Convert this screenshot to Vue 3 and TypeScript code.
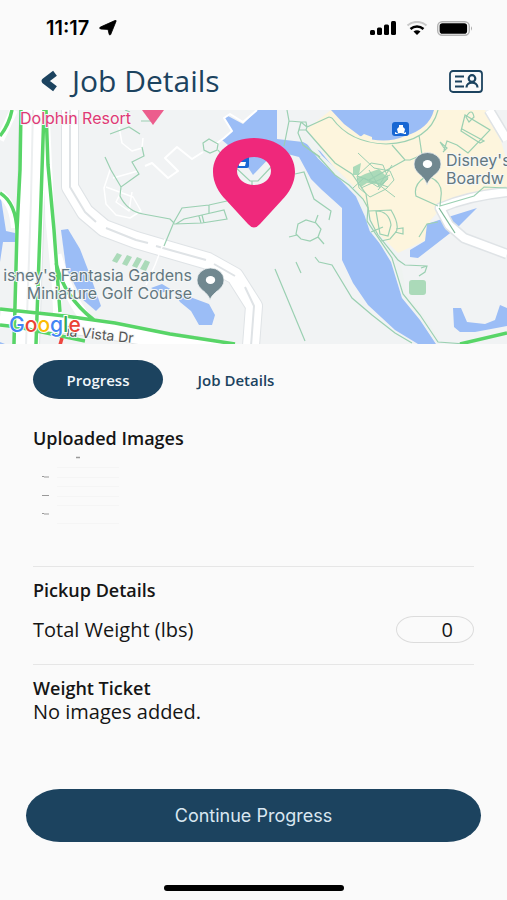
<script setup lang="ts">
import { ref } from 'vue'

type Tab = 'progress' | 'details'

const activeTab = ref<Tab>('progress')
const totalWeight = ref('0')
const tabs: { id: Tab; label: string }[] = [
  { id: 'progress', label: 'Progress' },
  { id: 'details', label: 'Job Details' },
]
</script>

<template>
  <div class="screen">
    <div class="status">
      <div class="clock">
        <span>11:17</span>
        <svg width="18" height="16" viewBox="0 0 18 16" aria-hidden="true">
          <path d="M17 1.400 11.800 14.300Q11.200 15.800 10.200 14.500L9 9.400 1.500 9Q-.2 8.100 1.300 7.100L15.800.6Q17.700 0 17 1.400Z" stroke="#000" stroke-width=".8" />
        </svg>
      </div>
      <div class="signals">
        <svg width="27" height="14" viewBox="0 0 27 14" aria-hidden="true">
          <rect x="0" y="9" width="5" height="5" rx="1.500" />
          <rect x="7" y="6.500" width="5" height="7.500" rx="1.500" />
          <rect x="14" y="3.500" width="5" height="10.500" rx="1.500" />
          <rect x="21" y="0" width="5" height="14" rx="1.500" />
        </svg>
        <svg width="22" height="14" viewBox="0 0 22 14" fill="none" aria-hidden="true">
          <path d="M1.500 4.500C7-.2 15-.2 20.500 4.500" stroke="#c9c9c9" stroke-width="2.200" />
          <path d="M4.500 8C8.300 4.700 13.700 4.700 17.500 8" stroke="#000" stroke-width="2.500" />
          <path d="M7.500 10.500Q11 8 14.500 10.500L11 14Z" fill="#000" />
        </svg>
        <svg width="36" height="15" viewBox="0 0 36 15" aria-hidden="true">
          <rect x=".7" y=".7" width="31.600" height="13.600" rx="4.500" fill="none" stroke="#b3b3b3" stroke-width="1.400" />
          <rect x="2.600" y="2.300" width="27.500" height="10.400" rx="2.800" />
          <path d="M34 5.300Q36 7.500 34 9.700Z" fill="#aaa" />
        </svg>
      </div>
    </div>

    <header class="header">
      <button class="back" type="button" aria-label="Back">
        <svg width="18" height="22" viewBox="0 0 18 22" fill="none" aria-hidden="true">
          <path d="M15 3.200 4.800 11 15 18.800" stroke="#1c435f" stroke-width="6.200" stroke-linejoin="round" />
        </svg>
      </button>
      <h1>Job Details</h1>
      <button class="contact" type="button" aria-label="Contact card">
        <svg width="34" height="23" viewBox="0 0 34 23" fill="none" stroke="#1c435f" stroke-width="1.800" aria-hidden="true">
          <rect x="1" y="1" width="32" height="21" rx="3" />
          <path d="M6 6.500h9M6 11.500h7M6 16.500h9" />
          <circle cx="23" cy="8.500" r="3.300" stroke-width="2.200" />
          <path d="M17.500 17.500c0-6.500 11-6.500 11 0" stroke-width="2.200" />
        </svg>
      </button>
    </header>

    <svg class="map" viewBox="0 110 507 234" preserveAspectRatio="xMidYMid slice" role="img" aria-label="Map of the job location">
      <rect y="110" width="507" height="234" fill="#f1f3f4" />
      <path d="M307 129 331 110H485L501 141 507 162V192L443 206 430 221 426 240 398 253 375 230 358 195 337 171Z" fill="#fdf5dd" />

      <g fill="#9bbdf6">
        <path d="M222 140 232 131 224 118 228 116 243 124 257 110H277V139L303 142 320 151 340 175 354 188 363 202 371 229 391 262 402 298 420 320 436 344H418L395 330 368 305 353 283 342 260V208L322 190 311 179 299 157 276 151 253 175 240 155Z" />
        <path d="M331 110 344 124 360 136Q384 145 405 136 429 129 434 110Z" />
        <path d="M418 258 410 257V250L425 241 427 224 445 218 477 208 458 227Z" />
        <path d="M453 308H461L467 322 485 324 495 320 500 305 507 308V326L475 332H460L454 327Z" />
        <path d="M0 192 6 231 15 233V242L3 242 0 262Z" />
        <path d="M61 230 68 229 80 249 90 275 101 306 96 311 82 299 66 268Z" />
        <path d="M172 289 190 297 209 304 215 315 212 325H199L191 311 180 302Z" />
        <path d="M151 288 162 284 172 290 160 293Z" />
        <path d="M0 342 5 344H0Z" />
      </g>
      <path d="M359 138 364 134 372 137V142Z" fill="#fdf5dd" />

      <g fill="#abdab9">
        <rect x="409" y="280" width="17" height="15" rx="3" />
        <path d="M117 253 122 255 117 263 112 261ZM127 255 132 257 127 266 122 264ZM137 257 142 259 137 268 132 266ZM145 260 150 262 146 271 140 269Z" />
        <path d="M365 174 379 169 388 178 383 185 367 183 361 187 357 178ZM353 167 361 163 359 175 353 175Z" />
      </g>

      <g fill="none" stroke="#fff" stroke-linejoin="round">
        <path d="M33 108 31 200 26 346" stroke="#e1e5e7" stroke-width="28" />
        <path d="M33 108 31 200 26 346" stroke-width="26" />
        <path d="M33 108 31 200 26 346" stroke="#eceff0" stroke-width="2" />
        <path d="M45 110 50 220 56 280 58 320" stroke-width="9" />
        <path d="M56 255Q66 292 85 318" stroke-width="11" />
        <path d="M0 194Q13 202 15 228M0 140 14 110" stroke-width="8" />
        <path d="M0 317 90 328 170 341 220 349" stroke="#e1e5e7" stroke-width="18" />
        <path d="M0 317 90 328 170 341 220 349" stroke-width="16" />
        <path d="M70 108V187L85 212 104 228 136 240 170 250 208 261 235 276 254 306 251 346" stroke="#dfe3e6" stroke-width="18" />
        <path d="M70 108V187L85 212 104 228 136 240 170 250 208 261 235 276 254 306 251 346" stroke-width="16" />
        <path d="M70 108V187L85 212 96 222M106 228 136 240 148 243M156 246 170 250 206 260M214 264 235 276M245 287 254 306 251 346" stroke="#dfe3e6" stroke-width="2" />
        <path d="M507 192Q468 196 440 208L449 225 464 238 507 254M489 110 507 140" stroke="#dfe3e6" stroke-width="11" />
        <path d="M507 192Q468 196 440 208L449 225 464 238 507 254M489 110 507 140" stroke-width="8" />
        <path d="M145 166 152 163 168 178 178 171 165 158 177 147 192 159 203 152M216 144 224 138 232 131 224 118 230 114 243 122 257 110" stroke-width="2" />
        <path d="M119 127 122 143 132 151 142 148 143 138M110 170 104 188 106 204 116 215 130 218 141 211 133 197 106 187M122 190 116 202 129 211 132 192M113 178 138 171M165 239 155 265 146 285" stroke-width="1.500" />
        <path d="M302 133 320 157 344 180 358 195 367 215 372 230 398 262 404 294 421 316 438 342" stroke="#eff3f1" stroke-width="5" />
      </g>

      <g fill="none" stroke="#9bd0b2" stroke-width="1.200">
        <path d="M110 134 129 127 140 134M125 110 130 112M141 121H151M142 147 144 156 132 162 139 174 121 187 111 170 105 157M121 187 120 196Q127 211 143 214L170 219 174 223" />
        <path d="M203 143 209 139 218 144 217 150 210 153 204 150ZM227 201 209 205 182 208 174 222 164 246M174 224 202 223 227 219 224 210 202 215 184 219 176 224M209 205V213M199 216 201 223M202 215 204 223M218 150 222 155" />
        <path d="M287 110 289 121 284 146M289 121 301 122 307 127 329 117M301 122 298 133 303 145 320 157M301 122 299 130 306 130 307 127 306 122ZM295 174 304 172 314 199 331 211 329 220M234 166 250 181H258L272 166M252 181V188" />
        <path d="M298 224 306 220 316 223 321 229 318 237 310 241 301 239 296 234ZM289 237 297 235M318 237 324 244M315 223 318 215M275 269 305 341M296 262 301 273M315 257 319 262 332 265 352 298 372 315 395 333 412 343" />
        <path d="M306 130 320 146 335 163 352 174 366 194 370 220 378 235 398 260 405 265 427 266 425 272 419 276M427 266 421 268" />
        <path d="M303 145 318 156 335 175 349 185 363 199 368 208 367 221 392 258 403 294 420 315 438 342 466 344" />
        <path d="M332 118Q350 143 386 144 430 142 438 110M329 117 332 118M392 145 405 160 410 160 422 155 419 135M405 160 369 180M440 142 447 148 443 152M440 142 444 148M444 150 447 141 457 145 468 153 490 130 465 115 461 131 480 143 484 141 462 129M466 117Q472 107 474 117L469 122Z" />
        <path d="M358 153 374 168 390 171 394 180 386 189 370 197 359 188 357 176 371 163 383 165 388 178 378 190M361 188 390 175M378 184 395 197M357 176 388 187M369 170 380 188M380 184 392 165M353 188 364 178 378 187 388 179" stroke-width="1" />
        <path d="M425 177Q413 185 416 196L438 206M430 177Q443 183 441 196L440 206 474 196 484 187 507 188M369 211 391 210Q400 225 396 232L390 239 381 241M376 211Q389 211 391 225L388 236 380 234ZM396 229 403 228V234L395 232M371 232 383 227M438 222 427 224 419 237" />
        <path d="M439 208 455 233" stroke="#7bb795" />
      </g>

      <g fill="none" stroke="#58d567" stroke-width="3.500">
        <path d="M21 110 20 170 17 230 14 344M44 110 40 230 36 344M46 110 48 165 54 230 60 312M0 193Q16 203 17 231M0 136Q9 125 12 110M0 309 65 316 115 323 170 334 235 344M0 325 18 327 85 341M56 263Q64 297 94 320M460 344 507 333" />
        <path d="M62 338 60 345" stroke="#ee4740" />
      </g>

      <g class="labels">
        <path d="M142 110H164L153 125Z" fill="#ec5d8d" />
        <text x="20" y="124" class="resort">Dolphin Resort</text>
        <text x="446" y="166">Disney's</text>
        <text x="446" y="184">Boardw</text>
        <text x="192" y="281" text-anchor="end">isney's Fantasia Gardens</text>
        <text x="192" y="299" text-anchor="end">Miniature Golf Course</text>
        <text x="66" y="336" class="street" transform="rotate(6 66 336)">ia Vista Dr</text>
      </g>
      <g fill="#718890" stroke="#edf1f2" stroke-width=".8">
        <path d="M427 185C425 175 414 174 414 164A13.500 11.500 0 0 1 441 164C441 174 430 175 427 185Z" />
        <path d="M210 300C208 291 197 290 197 280A13.500 12 0 0 1 224 280C224 290 213 291 210 300Z" />
      </g>
      <ellipse cx="427.500" cy="164" rx="4.700" ry="4" fill="#fff" />
      <ellipse cx="210.500" cy="280" rx="4.700" ry="4" fill="#fff" />
      <g>
        <rect x="392" y="122" width="17" height="14" rx="3" fill="#1766d3" />
        <path d="M397 129 399 127V125H403V127L405 129 404 133H398ZM395 132Q400.500 136 406 132V134H395Z" fill="#fff" />
        <rect x="236" y="155" width="13" height="13" rx="2" fill="#1766d3" />
        <path d="M238 162H246L245 166H239Z" fill="#fff" />
      </g>
      <path fill="#ef287b" fill-rule="evenodd" d="M254 138C231 138 213 152 213 172 213 183 219 193 226 200L248 224Q254 231 260 224L282 200C289 193 295 183 295 172 295 152 277 138 254 138ZM254 157A17 14 0 1 1 254 185 17 14 0 1 1 254 157Z" />
      <text x="9" y="332" class="google"><tspan fill="#4285f4">G</tspan><tspan fill="#ea4335">o</tspan><tspan fill="#fbbc05">o</tspan><tspan fill="#4285f4">g</tspan><tspan fill="#34a853">l</tspan><tspan fill="#ea4335">e</tspan></text>
    </svg>

    <main class="content">
      <nav class="tabs" aria-label="Job sections">
        <button
          v-for="tab in tabs"
          :key="tab.id"
          type="button"
          class="tab"
          :class="{ active: activeTab === tab.id }"
          @click="activeTab = tab.id"
        >
          {{ tab.label }}
        </button>
      </nav>

      <section class="uploads">
        <h2>Uploaded Images</h2>
        <svg width="90" height="78" viewBox="0 0 90 78" aria-hidden="true">
          <g fill="none" stroke="#f5f5f5">
            <path d="M24 17.500h62M24 27.500h62M24 36.500h62M24 46.500h62M24 55.500h62M24 73.500h62" />
          </g>
          <g fill="none" stroke="#999">
            <path d="M43 7.500h4" stroke-width="1.500" />
            <path d="M9 26.500h2M11 27h5M9 45.500h2M11 45.500h5M9 63.500h2M11 64h5" />
          </g>
        </svg>
      </section>

      <section class="pickup">
        <h2>Pickup Details</h2>
        <div class="field">
          <label for="total-weight">Total Weight (lbs)</label>
          <input id="total-weight" v-model="totalWeight" type="text" inputmode="numeric" />
        </div>
      </section>

      <section class="ticket">
        <h2>Weight Ticket</h2>
        <p>No images added.</p>
      </section>
    </main>

    <footer class="footer">
      <button class="continue" type="button">Continue Progress</button>
      <div class="home-bar"></div>
    </footer>
  </div>
</template>

<style>
body {
  background: #fafafa;
}
</style>

<style scoped>
.screen {
  display: flex;
  flex-direction: column;
  min-height: 100vh;
  background: #fafafa;
  color: #151515;
  font-family: "Open Sans", "Noto Sans", sans-serif;
}
.screen * {
  box-sizing: border-box;
}
button {
  border: 0;
  padding: 0;
  background: none;
  font-family: inherit;
  cursor: pointer;
}
h1,
h2,
p {
  margin: 0;
}
svg {
  display: block;
  flex: none;
}
.status {
  display: flex;
  align-items: center;
  justify-content: space-between;
  height: 56px;
  padding: 0 34px 0 46px;
}
.clock {
  display: flex;
  align-items: center;
  gap: 10px;
  color: #000;
  font: 600 20px/24px Inter, sans-serif;
}
.signals {
  display: flex;
  align-items: center;
  gap: 9px;
}
.header {
  display: flex;
  align-items: center;
  height: 54px;
  padding: 0 24px 4px 40px;
  color: #1c435f;
}
h1 {
  flex: 1;
  margin-left: 14px;
  font-size: 30px;
  font-weight: 400;
  line-height: 36px;
}
.map {
  width: 100%;
  height: 234px;
}
.labels text {
  font: 400 16px Inter, sans-serif;
  fill: #63777f;
  stroke: #f5f7f7;
  stroke-width: 2px;
  paint-order: stroke;
}
.labels .resort {
  fill: #df3975;
}
.labels .street {
  font-size: 14px;
  fill: #555;
}
.google {
  font: 500 21px Inter, sans-serif;
  stroke: #fff;
  stroke-width: 2px;
  paint-order: stroke;
}
.content {
  padding: 16px 33px 0;
}
.tabs {
  display: flex;
}
.tab {
  width: 130px;
  height: 39px;
  border-radius: 26px / 50%;
  color: #1c435f;
  font-size: 15px;
  font-weight: 600;
}
.tab + .tab {
  margin-left: 8px;
}
.tab.active {
  background: #1c435f;
  color: #f1f6fa;
}
h2 {
  font-size: 18px;
  font-weight: 600;
  line-height: 24px;
}
.uploads {
  padding: 27px 0 38px;
}
.pickup,
.ticket {
  border-top: 1px solid #e6e6e6;
  padding-top: 11px;
}
.pickup {
  padding-bottom: 21px;
}
.field {
  display: flex;
  align-items: center;
  justify-content: space-between;
  margin-top: 14px;
}
.field label,
.ticket p {
  font-size: 20px;
  line-height: 24px;
}
.field input {
  width: 78px;
  height: 27px;
  padding: 0 20px;
  border: 1px solid #dcdcdc;
  border-radius: 18px / 50%;
  background: #fafafa;
  color: #151515;
  font: 20px "Open Sans", sans-serif;
  text-align: right;
}
.footer {
  display: flex;
  flex-direction: column;
  align-items: center;
  margin-top: auto;
  padding: 0 26px 9px;
}
.continue {
  width: 100%;
  height: 53px;
  border-radius: 34px / 50%;
  background: #1c435f;
  color: #d9e7f1;
  font: 400 18px Inter, sans-serif;
}
.home-bar {
  width: 180px;
  height: 6px;
  margin-top: 43px;
  border-radius: 3px;
  background: #000;
}
</style>
